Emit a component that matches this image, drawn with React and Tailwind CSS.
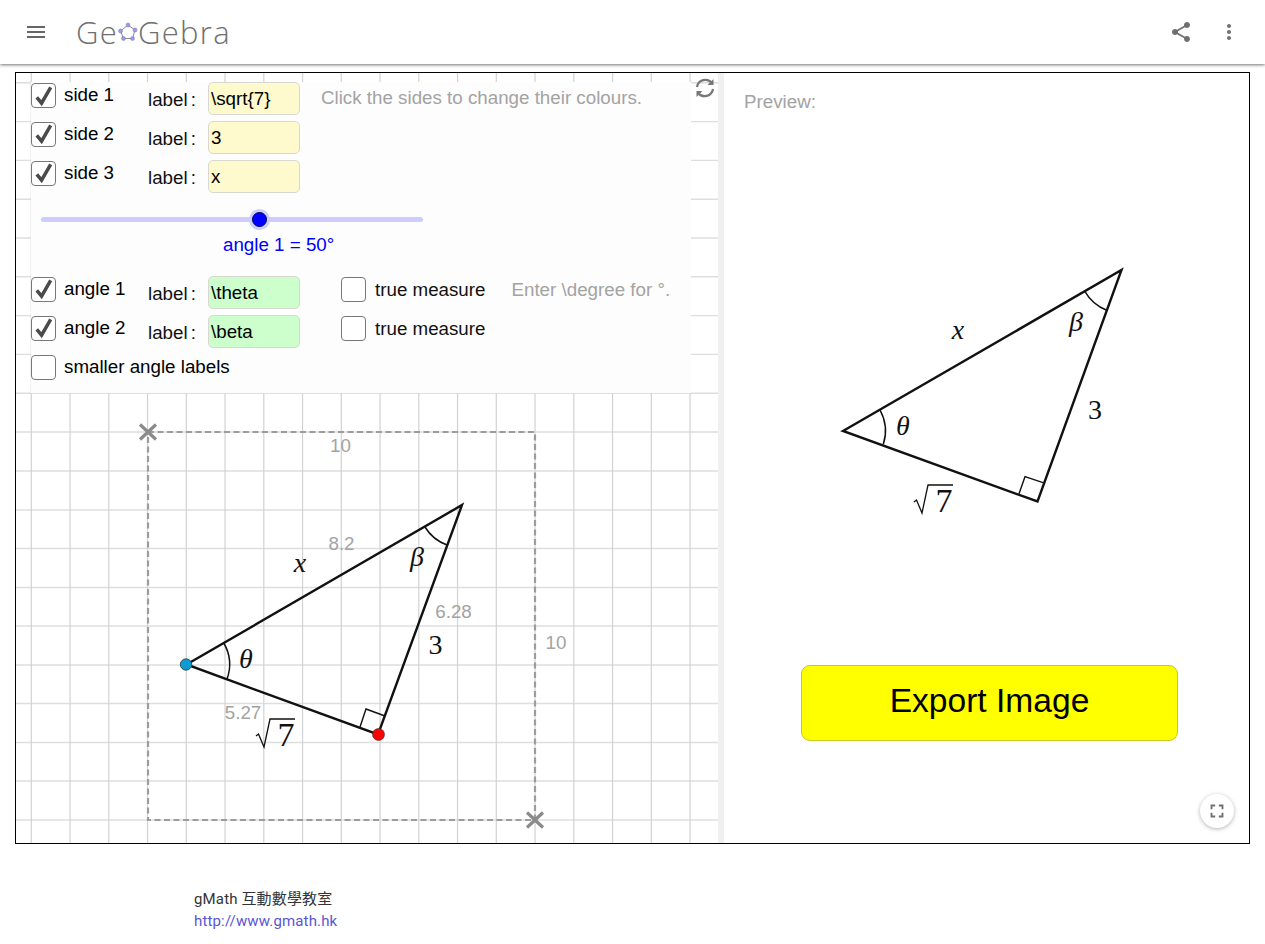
import { MdMenu, MdShare, MdMoreVert, MdFullscreen } from 'react-icons/md';

const sans = { fontFamily: '"Liberation Sans", Arial, sans-serif' };
const GRID_X = Array.from({ length: 18 }, (_, i) => 31.3 + 38.75 * i);
const GRID_Y = Array.from({ length: 10 }, (_, i) => 82.8 + 38.8 * i).concat([471, 510, 548.5, 587.5, 626, 665, 703.5, 742.5, 781, 820]);

function Checkbox({ checked }) {
    return (
        <span className="flex h-[25px] w-[25px] shrink-0 items-center justify-center rounded-[4px] border border-[#777] bg-white">
            {checked && (
                <svg viewBox="0 0 24 24" className="h-[24px] w-[24px]">
                    <path d="M5 13.5 L10 19.5 L19.5 3" fill="none" stroke="#4a4a4a" strokeWidth="3.6" />
                </svg>
            )}
        </span>
    );
}

function LabelInput({ value, color }) {
    return (
        <span
            className={`mt-[-1px] flex h-[33px] w-[92px] shrink-0 items-center rounded-[5px] border border-[#d8d8d0] pl-[2px] pt-[1px] text-[18.75px] text-black ${color}`}
        >
            {value}
        </span>
    );
}

function ControlRow({ checked, name, value, color, children }) {
    return (
        <div className="flex h-[38.8px] items-start">
            <Checkbox checked={checked} />
            <span className="ml-[8px] w-[84px] shrink-0 text-[18.75px] leading-[24px] text-black">{name}</span>
            <span className="mt-[5px] w-[60px] shrink-0 text-[18.75px] leading-[24px] text-[#111]">
                label<span className="ml-[3px]">:</span>
            </span>
            <LabelInput value={value} color={color} />
            {children}
        </div>
    );
}

function TrueMeasure() {
    return (
        <div className="ml-[41px] flex items-start">
            <Checkbox />
            <span className="ml-[9px] text-[18.75px] leading-[26px] text-[#111]">true measure</span>
        </div>
    );
}

function MathLabel({ x, y, size = 28, italic = true, children }) {
    return (
        <text
            x={x}
            y={y}
            textAnchor="middle"
            fontSize={size}
            fontStyle={italic ? 'italic' : 'normal'}
            fontFamily='"Liberation Serif", "Times New Roman", serif'
            fill="#111"
        >
            {children}
        </text>
    );
}

function SqrtSeven({ x, y }) {
    return (
        <g>
            <path
                d={`M${x} ${y - 10} l2.5 -2 l5.5 13 l6 -28 h25`}
                fill="none"
                stroke="#111"
                strokeWidth="1.3"
            />
            <MathLabel x={x + 30} y={y} size={34} italic={false}>7</MathLabel>
        </g>
    );
}

function GreyNum({ x, y, children }) {
    return (
        <text x={x} y={y} textAnchor="middle" fontSize="18.75" fontFamily='"Liberation Sans", Arial, sans-serif' fill="#a3a3a3">
            {children}
        </text>
    );
}

function Cross({ x, y }) {
    return (
        <path
            d={`M${x - 8} ${y - 7.5} L${x + 8} ${y + 7.5} M${x + 8} ${y - 7.5} L${x - 8} ${y + 7.5}`}
            stroke="#8a8a8a"
            strokeWidth="3.2"
            fill="none"
        />
    );
}

function Canvas() {
    return (
        <svg viewBox="16 73 702 770" className="absolute inset-0 h-[770px] w-[702px]">
            {GRID_Y.map((y) => (
                <line key={y} x1="16" x2="718" y1={y} y2={y} stroke="#dedede" strokeWidth="1.4" />
            ))}
            {GRID_X.map((x) => (
                <line key={x} x1={x} x2={x} y1="73" y2="843" stroke="#d2d2d2" strokeWidth="1.2" />
            ))}
            <path d="M148 432 H535 V820 H148 Z" fill="none" stroke="#9c9c9c" strokeWidth="2.2" strokeDasharray="6 3.5" />
            <Cross x={148} y={432} />
            <Cross x={535} y={820} />
            <GreyNum x={340.5} y={452}>10</GreyNum>
            <GreyNum x={556} y={649}>10</GreyNum>
            <GreyNum x={341.5} y={550}>8.2</GreyNum>
            <GreyNum x={453.5} y={618}>6.28</GreyNum>
            <GreyNum x={243} y={719}>5.27</GreyNum>

            <path d="M186.5 664.5 L462 505 L378 734.5 Z" fill="none" stroke="#111" strokeWidth="2.4" strokeLinejoin="miter" />
            <path d="M360 727 L366 709 L385 716" fill="none" stroke="#111" strokeWidth="1.4" />
            <path d="M223.5 642.5 A43.5 43.5 0 0 1 226.7 680" fill="none" stroke="#111" strokeWidth="1.5" />
            <path d="M425 527 A43 43 0 0 0 447 545" fill="none" stroke="#111" strokeWidth="1.5" />

            <MathLabel x={300} y={572}>x</MathLabel>
            <MathLabel x={417} y={566}>β</MathLabel>
            <MathLabel x={246} y={668}>θ</MathLabel>
            <MathLabel x={435.5} y={654} italic={false}>3</MathLabel>
            <SqrtSeven x={256} y={746} />

            <circle cx="186" cy="664.5" r="5.7" fill="#0d9bd3" stroke="#333" strokeWidth="0.8" />
            <circle cx="378.5" cy="734.5" r="6" fill="#ff0000" stroke="#333" strokeWidth="0.6" />
        </svg>
    );
}

function ControlPanel() {
    return (
        <div className="absolute left-[15px] top-[9px] flex h-[311px] w-[660px] flex-col bg-[#fdfdfd]" style={sans}>
            <div className="pt-[1px]">
                <ControlRow checked name="side 1" value="\sqrt{7}" color="bg-[#fffacd]">
                    <span className="ml-[21px] mt-[3px] text-[18.75px] leading-[24px] text-[#a3a3a3]">
                        Click the sides to change their colours.
                    </span>
                </ControlRow>
                <ControlRow checked name="side 2" value="3" color="bg-[#fffacd]" />
                <ControlRow checked name="side 3" value="x" color="bg-[#fffacd]" />
            </div>
            <div className="relative ml-[10px] mt-[16px] h-[9px] w-[382px]">
                <div className="mt-[2px] h-[5px] rounded-full bg-[#ccccff]" />
                <div className="absolute left-[207.5px] top-[-6px] flex h-[21px] w-[21px] items-center justify-center rounded-full bg-[#ccccff]">
                    <div className="h-[15px] w-[15px] rounded-full border border-[#000066] bg-[#0000ff]" />
                </div>
            </div>
            <div className="ml-[192px] mt-[9px] text-[18.75px] leading-[24px] text-[#0000ff]">angle 1 = 50°</div>
            <div className="mt-[19.6px]">
                <ControlRow checked name="angle 1" value="\theta" color="bg-[#ccffcc]">
                    <TrueMeasure />
                    <span className="ml-[26px] text-[18.75px] leading-[26px] text-[#a3a3a3]">Enter \degree for °.</span>
                </ControlRow>
                <ControlRow checked name="angle 2" value="\beta" color="bg-[#ccffcc]">
                    <TrueMeasure />
                </ControlRow>
                <div className="flex items-start">
                    <Checkbox />
                    <span className="ml-[8px] text-[18.75px] leading-[24px] text-black">smaller angle labels</span>
                </div>
            </div>
        </div>
    );
}

function PreviewDrawing() {
    return (
        <svg viewBox="724 113 525 539" className="h-[539px] w-[525px]">
            <path d="M843 430 L1121.5 269 L1037.5 500.5 Z" fill="none" stroke="#111" strokeWidth="2.4" />
            <path d="M1019 492.7 L1025 475.7 L1043 481.7" fill="none" stroke="#111" strokeWidth="1.4" />
            <path d="M880 409 A43.5 43.5 0 0 1 883.3 443.3" fill="none" stroke="#111" strokeWidth="1.5" />
            <path d="M1085 290.7 A43 43 0 0 0 1106.7 309.3" fill="none" stroke="#111" strokeWidth="1.5" />
            <MathLabel x={958} y={338}>x</MathLabel>
            <MathLabel x={1076} y={330}>β</MathLabel>
            <MathLabel x={903} y={434}>θ</MathLabel>
            <MathLabel x={1095} y={418} italic={false}>3</MathLabel>
            <SqrtSeven x={914} y={511} />
        </svg>
    );
}

export default function App() {
    return (
        <div className="min-h-[944px] bg-white">
            <header className="flex h-[64px] items-center justify-between shadow-[0_1px_3px_rgba(0,0,0,0.55)]">
                <div className="flex items-center">
                    <MdMenu className="ml-[24px] text-[#666]" size={24} />
                    <div
                        className="ml-[28px] flex items-center text-[31px] font-light leading-none tracking-[1.3px] text-[#6f6f6f]"
                        style={{ fontFamily: '"Open Sans", sans-serif' }}
                    >
                        <span>Ge</span>
                        <svg viewBox="0 0 20 20" className="h-[20px] w-[20px]">
                            <path d="M10 3 L17 8 L14.5 16.5 L5.5 16.5 L2.5 9 Z" fill="none" stroke="#8d8d8d" strokeWidth="1" />
                            {[[10, 3], [17, 8], [14.5, 16.5], [5.5, 16.5], [2.5, 9]].map(([cx, cy]) => (
                                <circle key={cx} cx={cx} cy={cy} r="2" fill="#9a9af0" stroke="#6666aa" strokeWidth="0.4" />
                            ))}
                        </svg>
                        <span>Gebra</span>
                    </div>
                </div>
                <div className="flex items-center text-[#6f6f6f]">
                    <MdShare size={24} />
                    <MdMoreVert className="ml-[24px] mr-[24px]" size={24} />
                </div>
            </header>

            <main className="px-[15px] pt-[8px]">
                <div className="flex h-[772px] w-[1235px] border border-black">
                    <div className="relative w-[702px] overflow-hidden">
                        <Canvas />
                        <ControlPanel />
                        <svg viewBox="0 0 24 24" className="absolute left-[677px] top-[3px] h-[24px] w-[24px]">
                            <path d="M4 11 A8.5 8.5 0 0 1 19 7" fill="none" stroke="#777" strokeWidth="2.2" />
                            <path d="M20.5 3 V9 H14.5 Z" fill="#777" />
                            <path d="M20 13 A8.5 8.5 0 0 1 5 17" fill="none" stroke="#777" strokeWidth="2.2" />
                            <path d="M3.5 21 V15 H9.5 Z" fill="#777" />
                        </svg>
                    </div>
                    <div className="w-[6px] shrink-0 bg-[#f0f0f0]" />
                    <div className="relative flex flex-1 flex-col" style={sans}>
                        <div className="pl-[20px] pt-[17px] text-[18.75px] leading-[24px] text-[#a3a3a3]">Preview:</div>
                        <PreviewDrawing />
                        <button className="ml-[77px] mt-[12px] h-[76px] w-[377px] rounded-[9px] border border-[#c8c820] bg-[#ffff00] pb-[4px] text-[33.6px] text-black">
                            Export Image
                        </button>
                        <div className="absolute bottom-[15px] right-[15px] flex h-[34px] w-[34px] items-center justify-center rounded-full bg-white shadow-[0_1px_4px_rgba(0,0,0,0.3)]">
                            <MdFullscreen className="text-[#6f6f6f]" size={22} />
                        </div>
                    </div>
                </div>
            </main>

            <footer
                className="pl-[194px] pt-[44px] text-[15px] leading-[22px] tracking-[0.15px] text-[#333]"
                style={{ fontFamily: 'Roboto, "Noto Sans CJK TC", sans-serif' }}
            >
                <div>gMath 互動數學教室</div>
                <a className="text-[#5a55d6]" href="#gmath">http://www.gmath.hk</a>
            </footer>
        </div>
    );
}
